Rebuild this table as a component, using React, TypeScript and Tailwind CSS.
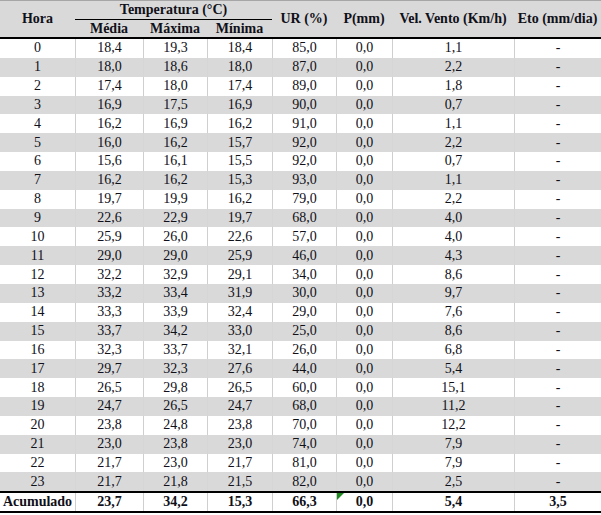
import React from "react";

const rows: string[][] = [
  ["0", "18,4", "19,3", "18,4", "85,0", "0,0", "1,1", "-"],
  ["1", "18,0", "18,6", "18,0", "87,0", "0,0", "2,2", "-"],
  ["2", "17,4", "18,0", "17,4", "89,0", "0,0", "1,8", "-"],
  ["3", "16,9", "17,5", "16,9", "90,0", "0,0", "0,7", "-"],
  ["4", "16,2", "16,9", "16,2", "91,0", "0,0", "1,1", "-"],
  ["5", "16,0", "16,2", "15,7", "92,0", "0,0", "2,2", "-"],
  ["6", "15,6", "16,1", "15,5", "92,0", "0,0", "0,7", "-"],
  ["7", "16,2", "16,2", "15,3", "93,0", "0,0", "1,1", "-"],
  ["8", "19,7", "19,9", "16,2", "79,0", "0,0", "2,2", "-"],
  ["9", "22,6", "22,9", "19,7", "68,0", "0,0", "4,0", "-"],
  ["10", "25,9", "26,0", "22,6", "57,0", "0,0", "4,0", "-"],
  ["11", "29,0", "29,0", "25,9", "46,0", "0,0", "4,3", "-"],
  ["12", "32,2", "32,9", "29,1", "34,0", "0,0", "8,6", "-"],
  ["13", "33,2", "33,4", "31,9", "30,0", "0,0", "9,7", "-"],
  ["14", "33,3", "33,9", "32,4", "29,0", "0,0", "7,6", "-"],
  ["15", "33,7", "34,2", "33,0", "25,0", "0,0", "8,6", "-"],
  ["16", "32,3", "33,7", "32,1", "26,0", "0,0", "6,8", "-"],
  ["17", "29,7", "32,3", "27,6", "44,0", "0,0", "5,4", "-"],
  ["18", "26,5", "29,8", "26,5", "60,0", "0,0", "15,1", "-"],
  ["19", "24,7", "26,5", "24,7", "68,0", "0,0", "11,2", "-"],
  ["20", "23,8", "24,8", "23,8", "70,0", "0,0", "12,2", "-"],
  ["21", "23,0", "23,8", "23,0", "74,0", "0,0", "7,9", "-"],
  ["22", "21,7", "23,0", "21,7", "81,0", "0,0", "7,9", "-"],
  ["23", "21,7", "21,8", "21,5", "82,0", "0,0", "2,5", "-"],
];

const total = ["Acumulado", "23,7", "34,2", "15,3", "66,3", "0,0", "5,4", "3,5"];

const cols = "grid grid-cols-[75px_68px_64px_65px_64px_56px_122px_87px]";

export default function App() {
  return (
    <div className="w-[601px] h-[515px] bg-white text-[14px] leading-none text-[#101018] font-[family-name:Liberation_Serif,serif] overflow-hidden">
      {/* header */}
      <div
        className={`${cols} grid-rows-[19px_17px] bg-[#d9d9d9] border-t border-[#a6a6a6] border-b-2 border-b-black font-bold`}
      >
        <div className="row-span-2 flex items-center justify-center">Hora</div>
        <div className="col-span-3 flex items-center justify-center border-b border-black pb-[1px]">
          Temperatura (°C)
        </div>
        <div className="row-span-2 flex items-center justify-center">UR (%)</div>
        <div className="row-span-2 flex items-center justify-center">P(mm)</div>
        <div className="row-span-2 flex items-center justify-center">Vel. Vento (Km/h)</div>
        <div className="row-span-2 flex items-center justify-center">Eto (mm/dia)</div>
        <div className="flex items-center justify-center">Média</div>
        <div className="flex items-center justify-center">Máxima</div>
        <div className="flex items-center justify-center">Mínima</div>
      </div>

      {/* body */}
      {rows.map((r, i) => (
        <div
          key={r[0]}
          className={`${cols} h-[18.85px] ${i % 2 === 1 ? "bg-[#d9d9d9]" : "bg-white"}`}
        >
          {r.map((v, j) => (
            <div
              key={j}
              className={`flex items-center justify-center ${
                j > 0 ? (i % 2 === 1 ? "border-l border-[#d6d6d6]" : "border-l border-[#cfcfcf]") : ""
              }`}
            >
              {v}
            </div>
          ))}
        </div>
      ))}

      {/* total */}
      <div className={`${cols} h-[22px] border-t-2 border-black border-b-2 font-bold`}>
        {total.map((v, j) => (
          <div
            key={j}
            className={`relative flex items-center justify-center ${j > 0 ? "border-l border-[#cfcfcf]" : ""}`}
          >
            {j === 5 && (
              <svg className="absolute left-0 top-0" width="7" height="7" viewBox="0 0 7 7">
                <polygon points="0,0 7,0 0,7" fill="#1f8a1f" />
              </svg>
            )}
            {v}
          </div>
        ))}
      </div>
    </div>
  );
}
